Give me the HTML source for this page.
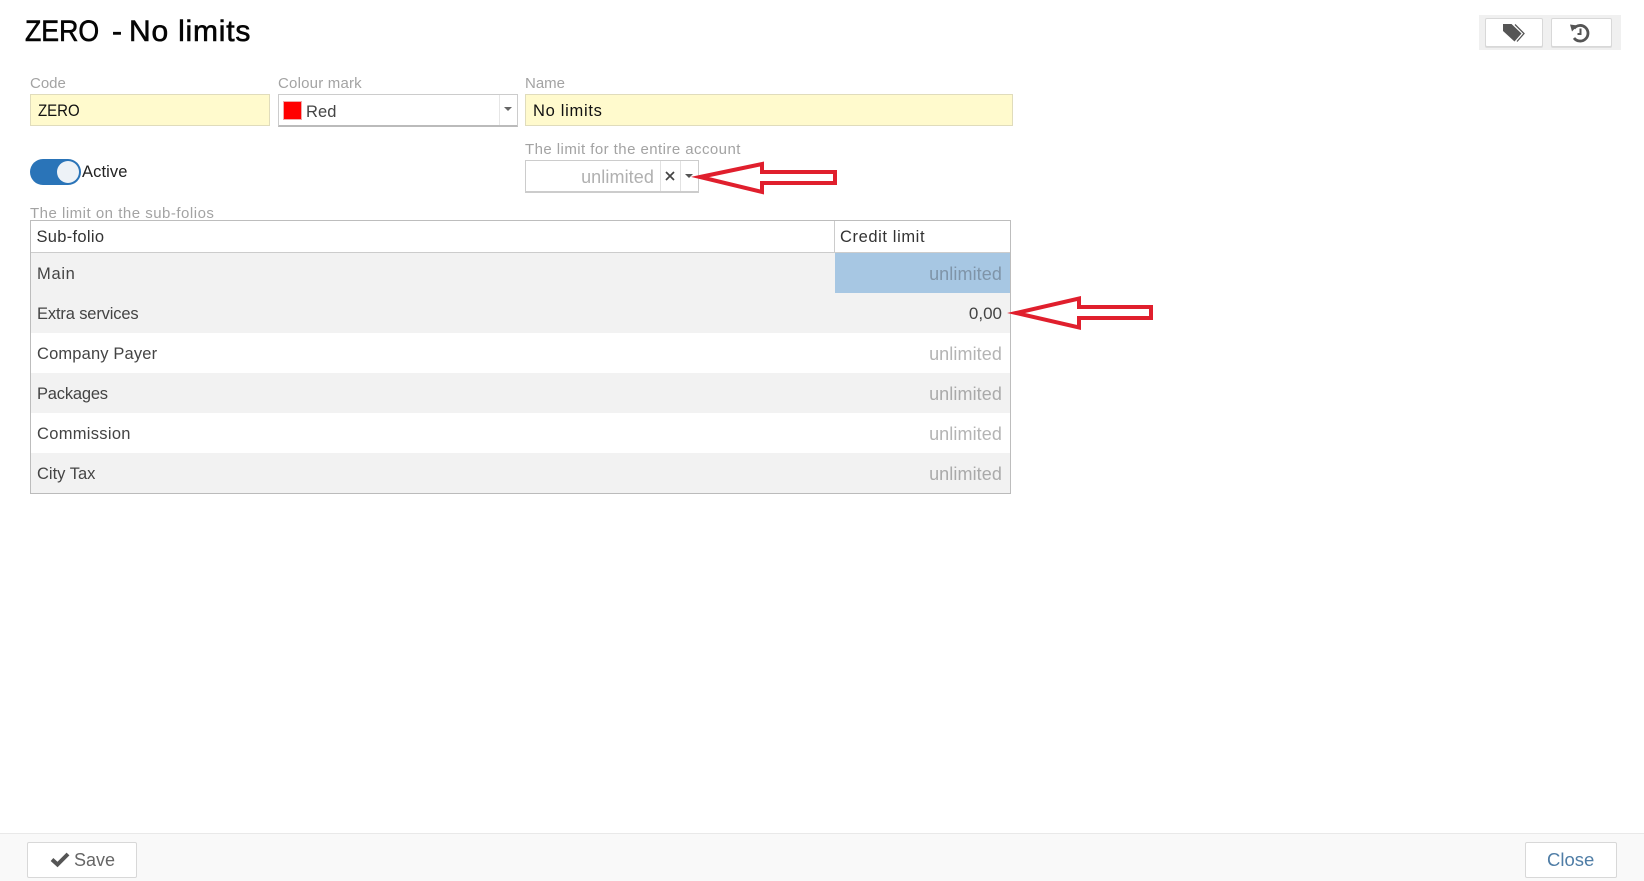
<!DOCTYPE html>
<html><head><meta charset="utf-8"><style>
html,body{margin:0;padding:0;background:#fff}
body{width:1644px;height:881px;position:relative;overflow:hidden;font-family:"Liberation Sans",sans-serif;font-size:16.5px;color:#333}
.a{position:absolute;box-sizing:border-box;white-space:nowrap}
.l{color:#a3a3a3;font-size:15px;line-height:18px}
.y{background:#fffacd;border:1px solid #e0dcbc;color:#111;line-height:32px;padding-left:7px}
.r{left:31px;width:979px;height:40px;line-height:42px;padding:0 7px 0 6px;background:#f2f2f2;color:#444}
.w{background:#fff}
.u{right:642px;line-height:42px;font-size:18px;color:#aaa}
.b{background:#fff;border:1px solid #d8d8d8;border-radius:2px}
.t{top:14px;font-size:30px;line-height:36px;color:#050505;-webkit-text-stroke:.6px #050505}
.n{display:inline-block;transform-origin:0 50%}
</style></head><body>
<div class="a t" style="left:25px"><span class="n" style="transform:scaleX(.89)">ZERO</span></div>
<div class="a t" style="left:112px">-</div>
<div class="a t" style="left:129px;letter-spacing:.8px">No limits</div>

<div class="a" style="left:1479px;top:15px;width:142px;height:35px;background:#f0f0f0"></div>
<div class="a b" style="left:1485px;top:18px;width:58px;height:29px;box-shadow:0 1px 0 #ddd"></div>
<div class="a b" style="left:1551px;top:18px;width:61px;height:29px;box-shadow:0 1px 0 #ddd"></div>
<svg class="a" style="left:1501px;top:23px" width="26" height="20" viewBox="0 0 26 20"><path d="M2 1h8.500l10 9.500-7 8L2 8z" fill="#555"/><path d="M14 1.500l9 9-7 8" fill="none" stroke="#555" stroke-width="1.300"/></svg>
<svg class="a" style="left:1569px;top:22px" width="22" height="22" viewBox="0 0 22 22"><path d="M5 6.500A7.800 7.800 0 1 1 5 16" fill="none" stroke="#555" stroke-width="2.800"/><path d="M1 2.500l7.500 1-5.500 6z" fill="#555"/><path d="M11.500 6.500v5.500h-3" fill="none" stroke="#555" stroke-width="2"/></svg>

<div class="a l" style="left:30px;top:75px">Code</div>
<div class="a y" style="left:30px;top:94px;width:240px;height:32px"><span class="n" style="transform:scaleX(.91)">ZERO</span></div>
<div class="a l" style="left:278px;top:75px;letter-spacing:.2px">Colour mark</div>
<div class="a" style="left:278px;top:94px;width:240px;height:33px;border:1px solid #ccc;border-bottom:2px solid #bbb"></div>
<div class="a" style="left:283px;top:101px;width:19px;height:19px;background:#f00;border:1px solid #eaa"></div>
<div class="a" style="left:306px;top:96px;line-height:32px;color:#444;letter-spacing:.1px">Red</div>
<div class="a" style="left:499px;top:95px;width:1px;height:30px;background:#e6e6e6"></div>
<div class="a" style="left:504px;top:107px;border:4px solid transparent;border-top-color:#666;border-bottom:0"></div>
<div class="a l" style="left:525px;top:75px">Name</div>
<div class="a y" style="left:525px;top:94px;width:488px;height:32px;letter-spacing:.7px">No limits</div>

<div class="a" style="left:30px;top:159px;width:51px;height:26px;border-radius:13px;background:#2a74b8"></div>
<div class="a" style="left:57px;top:161px;width:22px;height:22px;border-radius:50%;background:#edf2f7"></div>
<div class="a" style="left:82px;top:160px;line-height:25px;color:#222;letter-spacing:.1px">Active</div>

<div class="a l" style="left:525px;top:140.500px;letter-spacing:.44px">The limit for the entire account</div>
<div class="a" style="left:525px;top:160px;width:174px;height:33px;border:1px solid #ccc;border-bottom-width:2px"></div>
<div class="a u" style="right:990px;top:156px;color:#b0b0b0;letter-spacing:.1px">unlimited</div>
<div class="a" style="left:660px;top:161px;width:1px;height:30px;background:#e2e2e2"></div>
<div class="a" style="left:680px;top:161px;width:1px;height:30px;background:#e2e2e2"></div>
<svg class="a" style="left:663px;top:169px" width="14" height="14"><path d="M3 3l8 8M11 3l-8 8" stroke="#444" stroke-width="1.700"/></svg>
<div class="a" style="left:685px;top:174px;border:4px solid transparent;border-top-color:#555;border-bottom:0"></div>

<div class="a l" style="left:30px;top:204.500px;letter-spacing:.5px">The limit on the sub-folios</div>
<div class="a" style="left:30px;top:220px;width:981px;height:274px;border:1px solid #bdbdbd;border-bottom:2px solid #bbb"></div>
<div class="a" style="left:31px;top:252px;width:979px;height:1px;background:#ccc"></div>
<div class="a" style="left:834px;top:221px;width:1px;height:31px;background:#ccc"></div>
<div class="a" style="left:36.500px;top:222px;line-height:31px;color:#333;letter-spacing:.3px">Sub-folio</div>
<div class="a" style="left:840px;top:222px;line-height:31px;color:#333;letter-spacing:.6px">Credit limit</div>

<div class="a r" style="top:253px;letter-spacing:.7px">Main</div>
<div class="a r" style="top:293px;letter-spacing:-.15px">Extra services</div>
<div class="a r w" style="top:333px;letter-spacing:.15px">Company Payer</div>
<div class="a r" style="top:373px;letter-spacing:-.2px">Packages</div>
<div class="a r w" style="top:413px;letter-spacing:.3px">Commission</div>
<div class="a r" style="top:453px">City Tax</div>
<div class="a" style="left:835px;top:253px;width:175px;height:40px;background:#a7c7e3"></div>
<div class="a u" style="top:253px;color:#7f94a8;letter-spacing:.1px">unlimited</div>
<div class="a u" style="top:293px;color:#444;font-size:17px">0,00</div>
<div class="a u" style="top:333px;color:#b4b4b4;letter-spacing:.1px">unlimited</div>
<div class="a u" style="top:373px;letter-spacing:.1px">unlimited</div>
<div class="a u" style="top:413px;color:#b4b4b4;letter-spacing:.1px">unlimited</div>
<div class="a u" style="top:453px;letter-spacing:.1px">unlimited</div>

<svg class="a" style="left:0;top:0" width="1644" height="881">
<path d="M700 177L762 164V172H835V183H762V192Z" fill="#fff" stroke="#e01f2d" stroke-width="4" stroke-miterlimit="10"/>
<path d="M1016 313L1079 298.500V307H1151V318H1079V327.500Z" fill="#fff" stroke="#e01f2d" stroke-width="4" stroke-miterlimit="10"/>
</svg>

<div class="a" style="left:0;top:833px;width:1644px;height:48px;background:#f9f9f9;border-top:1px solid #e9e9e9"></div>
<div class="a b" style="left:27px;top:842px;width:110px;height:36px"></div>
<svg class="a" style="left:50px;top:851px" width="20" height="17" viewBox="0 0 20 17"><path d="M2 8.500l5.500 5L18 3" fill="none" stroke="#555" stroke-width="4"/></svg>
<div class="a" style="left:74px;top:842px;line-height:36px;font-size:18px;color:#666">Save</div>
<div class="a b" style="left:1525px;top:842px;width:92px;height:36px"></div>
<div class="a" style="left:1547px;top:842px;line-height:36px;font-size:18.500px;color:#4f7da6">Close</div>
</body></html>
